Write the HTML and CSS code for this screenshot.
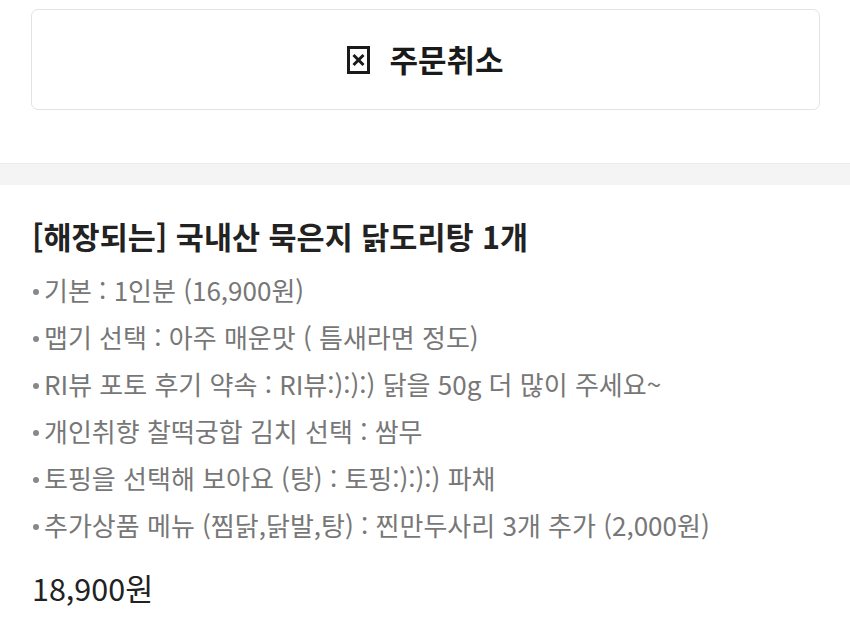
FILE: index.html
```html
<!DOCTYPE html>
<html lang="ko">
<head>
    <meta charset="UTF-8">
    <meta name="viewport" content="width=device-width, initial-scale=1.0">
    <title>주문 상세</title>
    <link rel="stylesheet" href="styles.css">
</head>
<body>
    <div class="cancel-area">
        <button type="button" class="cancel-btn">
            <svg class="cancel-icon" width="23" height="28" viewBox="0 0 23 28">
                <rect x="1.5" y="1.5" width="20" height="25" fill="none" stroke="#1a1a1a" stroke-width="3"/>
                <path d="M6.5 9 L16.5 19 M16.5 9 L6.5 19" stroke="#1a1a1a" stroke-width="3" fill="none"/>
            </svg>
            <span>주문취소</span>
        </button>
    </div>

    <div class="divider"></div>

    <section class="order">
        <h2 class="menu-name">[해장되는] 국내산 묵은지 닭도리탕 1개</h2>
        <ul class="option-list">
            <li>기본 : 1인분 (16,900원)</li>
            <li>맵기 선택 : 아주 매운맛 ( 틈새라면 정도)</li>
            <li>RI뷰 포토 후기 약속 : RI뷰:):):) 닭을 50g 더 많이 주세요~</li>
            <li>개인취향 찰떡궁합 김치 선택 : 쌈무</li>
            <li>토핑을 선택해 보아요 (탕) : 토핑:):):) 파채</li>
            <li>추가상품 메뉴 (찜닭,닭발,탕) : 찐만두사리 3개 추가 (2,000원)</li>
        </ul>
        <div class="price">18,900원</div>
    </section>
</body>
</html>
```

FILE: styles.css
```css
* {
    margin: 0;
    padding: 0;
    box-sizing: border-box;
}

body {
    font-family: "Noto Sans CJK KR", "Noto Sans", sans-serif;
    background: #ffffff;
    color: #222;
}

.cancel-area {
    padding: 9px 30px 0 31px;
    margin-bottom: 53px;
}

.cancel-btn {
    width: 100%;
    height: 101px;
    background: #fff;
    border: 1px solid #e3e3e3;
    border-radius: 7px;
    display: flex;
    align-items: center;
    justify-content: center;
    gap: 19px;
    padding-bottom: 3px;
    font-family: inherit;
    font-size: 31px;
    font-weight: 700;
    color: #1a1a1a;
}

.cancel-icon {
    flex-shrink: 0;
    margin-top: 3px;
}

.divider {
    height: 22px;
    background: #f4f4f4;
    border-top: 1px solid #ebebeb;
}

.order {
    padding: 31px 32px 0;
}

.menu-name {
    font-size: 30.5px;
    font-weight: 700;
    color: #222;
    line-height: 40px;
    margin-bottom: 10px;
}

.option-list {
    list-style: none;
}

.option-list li {
    font-size: 26px;
    line-height: 47px;
    color: #777;
    font-weight: 400;
    display: flex;
    align-items: center;
}

.option-list li::before {
    content: "";
    width: 6px;
    height: 6px;
    border-radius: 50%;
    background: #888;
    margin: 4px 5px 0 1px;
    flex-shrink: 0;
}

.price {
    font-size: 30.5px;
    line-height: 40px;
    margin-top: 20px;
    color: #222;
}
```
